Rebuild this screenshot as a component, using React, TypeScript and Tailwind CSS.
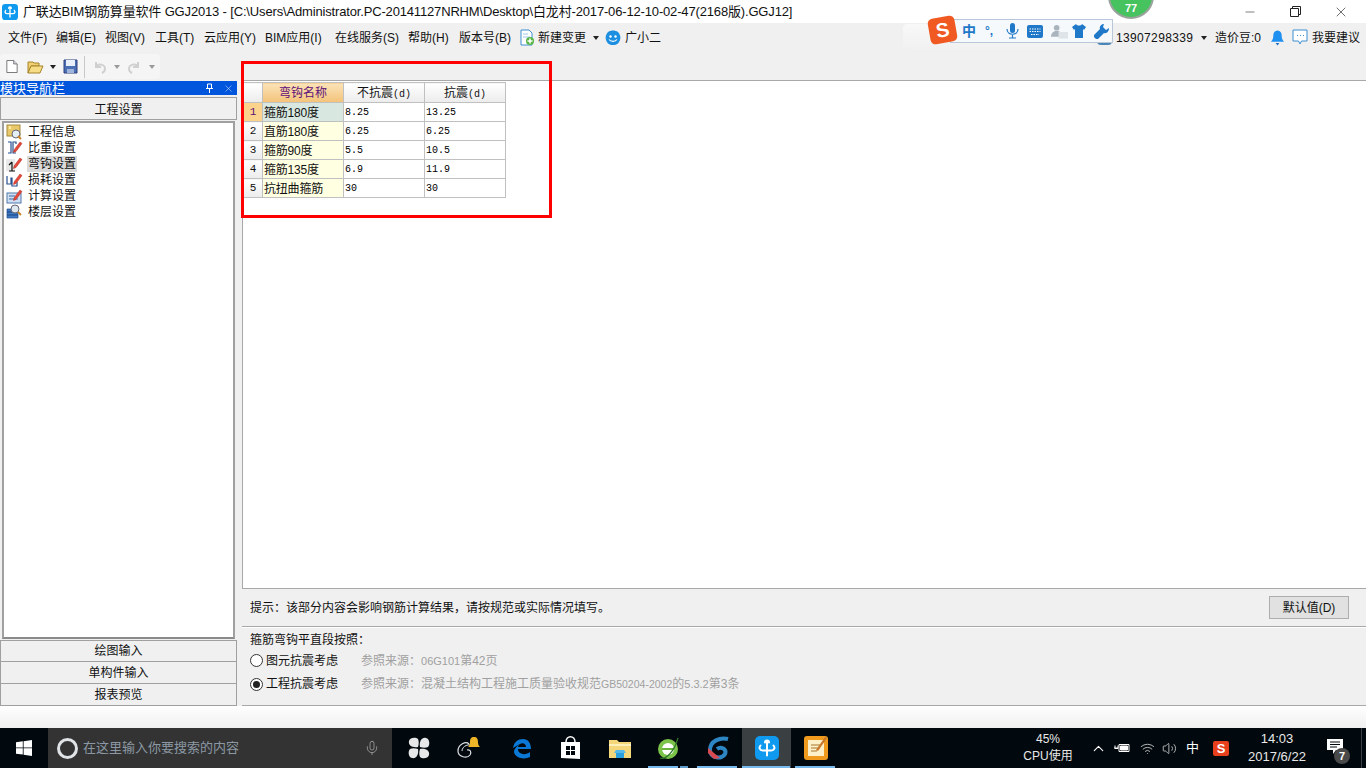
import { ChevronUp, Mic, Minus, Wifi, Volume2, X } from 'lucide-react';

const menus = [
  { label: '文件(F)', w: 'w-[48px]' },
  { label: '编辑(E)', w: 'w-[49px]' },
  { label: '视图(V)', w: 'w-[50px]' },
  { label: '工具(T)', w: 'w-[49px]' },
  { label: '云应用(Y)', w: 'w-[61px]' },
  { label: 'BIM应用(I)', w: 'w-[70px]' },
  { label: '在线服务(S)', w: 'w-[73px]' },
  { label: '帮助(H)', w: 'w-[51px]' },
  { label: '版本号(B)', w: 'w-[60px]' },
];

const rows = [
  ['1', '箍筋180度', '8.25', '13.25'],
  ['2', '直筋180度', '6.25', '6.25'],
  ['3', '箍筋90度', '5.5', '10.5'],
  ['4', '箍筋135度', '6.9', '11.9'],
  ['5', '抗扭曲箍筋', '30', '30'],
];

function Caret({ color = '#222' }: { color?: string }) {
  return (
    <svg width="6" height="4" viewBox="0 0 6 4" className="shrink-0">
      <path d="M0 0h6L3 4z" fill={color} />
    </svg>
  );
}

function AppLogo({ size = 16 }: { size?: number }) {
  return (
    <svg width={size} height={size} viewBox="0 0 24 24" className="shrink-0">
      <rect width="24" height="24" rx="5" fill="#0f9af0" />
      <path d="M12 6.500v13M10 6.500a2 2 0 1 1 4 0M5.500 9.500c-2 2.500-.5 5 2 5h9c2.500 0 4-2.500 2-5" fill="none" stroke="#fff" strokeWidth="2" strokeLinecap="round" />
    </svg>
  );
}

function Pencil() {
  return <path d="M8 10 14 2l2 1.500-6 8-2.500 1z" fill="#e8483a" stroke="#a8281c" strokeWidth=".5" />;
}

function TreeIcon({ kind }: { kind: number }) {
  return (
    <svg width="17" height="16" viewBox="0 0 17 16" className="shrink-0">
      {kind === 0 && (
        <>
          <rect x="1" y="1" width="13" height="11" fill="#e9c86a" stroke="#a58a3c" />
          <rect x="6" y="6" width="8" height="8" rx="4" fill="#e4eef5" stroke="#667" />
          <path d="m12 12 3 3" stroke="#c9862a" strokeWidth="2" />
          <path d="M3 2 5 5M5 2 3 5" stroke="#fff6b0" />
        </>
      )}
      {kind === 1 && (
        <>
          <path d="M2 2h3v11H2M10 4V2H7v11h3" fill="none" stroke="#27508f" strokeWidth="1.200" />
          <Pencil />
        </>
      )}
      {kind === 2 && (
        <>
          <rect x="0" y="3" width="9" height="12" fill="#e8e8e8" />
          <path d="M6 6v9M3 9l3-3M3 15h6" fill="none" stroke="#111" strokeWidth="1.200" />
          <Pencil />
        </>
      )}
      {kind === 3 && (
        <>
          <path d="M1 4v8h4V6h1v8h5v-4" fill="none" stroke="#27508f" strokeWidth="1.200" />
          <Pencil />
        </>
      )}
      {kind === 4 && (
        <>
          <rect x="1" y="5" width="14" height="10" fill="#cfe0f5" stroke="#5177a8" />
          <path d="M3 8h6M3 11h9" stroke="#3e6aa3" />
          <Pencil />
        </>
      )}
      {kind === 5 && (
        <>
          <path d="M1 5h11v3H1zM1 8h11v3H1zM1 11h11v3H1z" fill="#3f79c4" stroke="#1e4b8c" strokeWidth=".7" />
          <circle cx="9" cy="5" r="4" fill="#dfe8ee" stroke="#667" />
          <path d="m12 8 3 3" stroke="#c9862a" strokeWidth="2" />
        </>
      )}
    </svg>
  );
}

function NavButton({ label }: { label: string }) {
  return (
    <div className="h-[22px] border border-t-0 border-[#a0a0a0] first:border-t bg-[#f0f0f0] flex items-center justify-center text-[12px] text-[#111]">
      {label}
    </div>
  );
}

function TaskIcon({ active, children }: { active?: boolean; children: React.ReactNode }) {
  return (
    <div className={`w-[49px] h-full shrink-0 flex items-center justify-center ${active ? 'bg-[#3a3f42]' : ''}`}>
      {children}
    </div>
  );
}

function TitleBar() {
  return (
    <div className="h-[23px] bg-white flex items-center shrink-0">
      <div className="ml-[2px] mr-[5px]">
        <AppLogo />
      </div>
      <span className="text-[13px] tracking-[-0.16px] text-[#111] whitespace-nowrap">
        广联达BIM钢筋算量软件 GGJ2013 - [C:\Users\Administrator.PC-20141127NRHM\Desktop\白龙村-2017-06-12-10-02-47(2168版).GGJ12]
      </span>
      <div className="ml-auto flex items-center text-[#222]">
        <div className="w-[48px] flex justify-center"><Minus size={14} strokeWidth={1} /></div>
        <div className="w-[42px] flex justify-center">
          <svg width="11" height="11" viewBox="0 0 11 11" fill="none" stroke="#222">
            <path d="M.5 2.500h8v8h-8zM2.500 2.500v-2h8v8h-2" />
          </svg>
        </div>
        <div className="w-[50px] flex justify-center"><X size={16} strokeWidth={1} /></div>
      </div>
    </div>
  );
}

function MenuBar() {
  return (
    <div className="h-[27px] flex items-center pl-[8px] pt-[2px] shrink-0 text-[12px] text-[#111] whitespace-nowrap">
      {menus.map((m) => (
        <span key={m.label} className={`${m.w} shrink-0`}>{m.label}</span>
      ))}
      <svg width="16" height="17" viewBox="0 0 16 17" className="mr-[3px] shrink-0">
        <path d="M2 1h8l3 3v12H2z" fill="#fff" stroke="#3e8fd0" />
        <path d="M4 5h5M4 8h7" stroke="#9cc6e6" />
        <circle cx="11" cy="12" r="4" fill="#58b548" />
        <path d="M11 9.500v5M8.500 12h5" stroke="#fff" strokeWidth="1.500" />
      </svg>
      <span className="w-[48px]">新建变更</span>
      <span className="ml-[7px] mr-[6px]"><Caret /></span>
      <svg width="16" height="16" viewBox="0 0 16 16" className="mr-[4px] shrink-0">
        <path d="M3 2c3-2 7-2 10 0 2 2 3 5 2 8-1 3-3 5-7 5s-6-2-7-5c-1-3 0-6 2-8z" fill="#1d8fe0" />
        <circle cx="5.500" cy="6.500" r="1.200" fill="#fff" />
        <circle cx="10.500" cy="6.500" r="1.200" fill="#fff" />
        <path d="M4 9.500c2 2.500 6 2.500 8 0" stroke="#fff" strokeWidth="1.200" fill="none" />
      </svg>
      <span className="w-[36px]">广小二</span>

      <div className="ml-[242px] w-[190px] h-[25px] -mt-[2px] bg-gradient-to-b from-[#f8f8f8] to-[#f1f1f1] rounded-sm shrink-0" />
      <div className="ml-[4px] w-[15px] h-[14px] bg-[#4a86b8] rounded-sm shrink-0" />
      <span className="ml-[4px] w-[77px] tracking-[0.35px]">13907298339</span>
      <span className="ml-[8px] mr-[8px]"><Caret /></span>
      <span className="w-[46px]">造价豆:0</span>
      <svg width="13" height="16" viewBox="0 0 14 16" className="ml-[10px] shrink-0">
        <path d="M7 0c3 0 4.500 2.500 4.500 5 0 3 .5 5 2.500 7H0c2-2 2.500-4 2.500-7C2.500 2.500 4 0 7 0z" fill="#1f8ff0" />
        <path d="M5 13.500h4L7 16z" fill="#1f6fc0" />
      </svg>
      <svg width="16" height="17" viewBox="0 0 16 17" className="ml-[8px] mr-[4px] shrink-0">
        <path d="M1 1h14v11H9.500L8 15l-1.500-3H1z" fill="#fff" stroke="#3e8fd0" />
        <path d="M5 6.500h1M8 6.500h1M11 6.500h1" stroke="#3e8fd0" />
      </svg>
      <span>我要建议</span>
    </div>
  );
}

function ToolBar() {
  return (
    <div className="h-[31px] shrink-0 flex items-start">
      <div className="mt-[4px] w-[160px] h-[25px] bg-[#f5f5f5] rounded-sm flex items-center pl-[6px]">
        <svg width="12" height="15" viewBox="0 0 14 16"><path d="M1 1h8l4 4v10H1z" fill="#fff" stroke="#666" /><path d="M9 1v4h4" fill="#dde" stroke="#666" /></svg>
        <svg width="17" height="15" viewBox="0 0 17 15" className="ml-[9px]">
          <path d="M1 3h5l1 1h5v3H4l-3 7z" fill="#f0d070" stroke="#a5842c" />
          <path d="M4 7h12l-3 7H1z" fill="#f6dc84" stroke="#a5842c" />
        </svg>
        <span className="ml-[6px]"><Caret /></span>
        <svg width="15" height="15" viewBox="0 0 15 15" className="ml-[7px]">
          <path d="M1 1h13v13H1z" fill="#4a6fb5" stroke="#2c3f7d" />
          <path d="M3 1h9v6H3z" fill="#e8eefa" />
          <path d="M4 10h7v4H4z" fill="#9fb4da" />
        </svg>
        <div className="w-px h-[22px] bg-[#c8c8c8] ml-[6px]" />
        <svg width="14" height="14" viewBox="0 0 14 14" className="ml-[8px]" fill="none" stroke="#d0d0d0" strokeWidth="2">
          <path d="M3 2v5h5" /><path d="M3 7c2-4 9-3 9 2 0 2-1 3-3 4" />
        </svg>
        <span className="ml-[7px]"><Caret color="#9a9a9a" /></span>
        <svg width="14" height="14" viewBox="0 0 14 14" className="ml-[7px]" fill="none" stroke="#d0d0d0" strokeWidth="2">
          <path d="M11 2v5H6" /><path d="M11 7C9 3 2 4 2 9c0 2 1 3 3 4" />
        </svg>
        <span className="ml-[8px]"><Caret color="#9a9a9a" /></span>
      </div>
    </div>
  );
}

function LeftPanel() {
  const items = ['工程信息', '比重设置', '弯钩设置', '损耗设置', '计算设置', '楼层设置'];
  return (
    <div className="w-[237px] shrink-0 flex flex-col">
      <div className="h-[14px] bg-[#0055dd] text-white text-[13px] leading-none flex items-center shrink-0">
        <span>模块导航栏</span>
        <svg width="9" height="10" viewBox="0 0 9 10" className="ml-auto mr-[9px]" fill="none" stroke="#fff">
          <path d="M2.500 1h4v4.500h-4zM1 5.500h7M4.500 5.500V10" />
        </svg>
        <X size={11} strokeWidth={1} className="mr-[3px]" />
      </div>
      <div className="mt-[2px] h-[23px] pt-[2px] border border-[#a0a0a0] bg-[#f0f0f0] flex items-center justify-center text-[12px] text-[#111] shrink-0">
        工程设置
      </div>
      <div className="mt-px mx-[2px] flex-1 border-2 border-[#a0a0a0] border-b-[#8a8a8a] bg-white pt-[1px] pl-[2px] flex flex-col">
        {items.map((t, i) => (
          <div key={t} className="h-[16px] flex items-center gap-[4px] text-[12px] text-[#111]">
            <TreeIcon kind={i} />
            <span className={`h-[16px] leading-[16px] px-[1px] ${i === 2 ? 'bg-[#d9d9d9]' : ''}`}>{t}</span>
          </div>
        ))}
      </div>
      <div className="mt-[1px] shrink-0">
        <NavButton label="绘图输入" />
        <NavButton label="单构件输入" />
        <NavButton label="报表预览" />
      </div>
    </div>
  );
}

function SettingsTable() {
  const mono = "font-['Liberation_Mono',monospace] text-[10px]";
  return (
    <table className="border-collapse table-fixed w-[262px] text-[12px] text-[#111]">
      <colgroup>
        <col className="w-[19px]" />
        <col className="w-[81px]" />
        <col className="w-[81px]" />
        <col className="w-[81px]" />
      </colgroup>
      <thead>
        <tr className="h-[20px]">
          <th className="border border-[#c0c0c0] bg-gradient-to-b from-white to-[#ececec]" />
          <th className="border border-[#c0c0c0] bg-gradient-to-b from-[#fbe3b8] to-[#f3c278] font-normal text-[#60107a]">弯钩名称</th>
          <th className="border border-[#c0c0c0] bg-gradient-to-b from-white to-[#ececec] font-normal">
            不抗震<span className={mono}>(d)</span>
          </th>
          <th className="border border-[#c0c0c0] bg-gradient-to-b from-white to-[#ececec] font-normal">
            抗震<span className={mono}>(d)</span>
          </th>
        </tr>
      </thead>
      <tbody>
        {rows.map((r, i) => (
          <tr key={r[0]} className="h-[19px]">
            <td className={`border border-[#c0c0c0] pt-[1px] text-center font-['Liberation_Mono',monospace] text-[11px] ${i === 0 ? 'bg-[#fbd38c] text-[#60107a]' : 'bg-gradient-to-b from-white to-[#ececec]'}`}>{r[0]}</td>
            <td className={`border border-[#c0c0c0] pl-[1px] pt-[1px] whitespace-nowrap leading-none tracking-[-0.2px] ${i === 0 ? 'bg-[#d8e8e0]' : 'bg-[#ffffe2]'}`}>{r[1]}</td>
            <td className={`border border-[#c0c0c0] pl-[1px] pt-[1px] leading-none text-black ${mono}`}>{r[2]}</td>
            <td className={`border border-[#c0c0c0] pl-[1px] pt-[1px] leading-none text-black ${mono}`}>{r[3]}</td>
          </tr>
        ))}
      </tbody>
    </table>
  );
}

function Radio({ on }: { on?: boolean }) {
  return (
    <span className="w-[13px] h-[13px] rounded-full border border-[#333] bg-white flex items-center justify-center shrink-0">
      {on && <span className="w-[7px] h-[7px] rounded-full bg-[#222]" />}
    </span>
  );
}

function RightPanel() {
  return (
    <div className="flex-1 ml-[5px] -mt-px flex flex-col min-w-0">
      <div className="flex-1 bg-white border-t border-b border-l border-[#a8a8a8] pt-[1px]">
        <SettingsTable />
      </div>
      <div className="h-[38px] shrink-0 border-b border-[#a8a8a8] flex items-center pl-[8px] pr-[17px] text-[12px] text-[#111]">
        <span>提示：该部分内容会影响钢筋计算结果，请按规范或实际情况填写。</span>
        <div className="ml-auto w-[80px] h-[23px] bg-[#e1e1e1] border border-[#adadad] flex items-center justify-center">默认值(D)</div>
      </div>
      <div className="h-[79px] shrink-0 border-t border-t-white border-b border-b-[#a8a8a8] pl-[8px] pt-[3px] text-[12px] text-[#111]">
        <div className="h-[18px] leading-[18px]">箍筋弯钩平直段按照：</div>
        <div className="h-[23px] flex items-center">
          <Radio />
          <span className="ml-[3px] w-[95px]">图元抗震考虑</span>
          <span className="text-[#a0a0a0]">参照来源：<span className="text-[11px]">06G101</span>第42页</span>
        </div>
        <div className="h-[23px] pt-[1px] flex items-center">
          <Radio on />
          <span className="ml-[3px] w-[95px]">工程抗震考虑</span>
          <span className="text-[#a0a0a0]">
            参照来源：混凝土结构工程施工质量验收规范<span className="text-[10.5px]">GB50204-2002</span>的<span className="text-[11px]">5.3.2</span>第3条
          </span>
        </div>
      </div>
    </div>
  );
}

function Taskbar() {
  return (
    <div className="h-[40px] shrink-0 bg-[#02090e] flex items-center text-white relative">
      <div className="w-[48px] flex justify-center shrink-0">
        <svg width="16" height="16" viewBox="0 0 16 16" fill="#fff">
          <path d="M0 2.300 6.800 1.300v6.200H0zM7.600 1.200 16 0v7.500H7.600zM0 8.300h6.800v6.300L0 13.700zM7.600 8.300H16V16l-8.400-1.200z" />
        </svg>
      </div>
      <div className="w-[344px] h-full bg-[#333333] flex items-center shrink-0 pl-[9px]">
        <span className="w-[21px] h-[21px] rounded-full border-[3px] border-[#dfe3e6] shrink-0" />
        <span className="ml-[5px] text-[13px] text-[#8b98a3]">在这里输入你要搜索的内容</span>
        <Mic size={16} strokeWidth={1} className="ml-auto mr-[12px] text-[#b8b8b8]" />
      </div>
      <div className="ml-[2px] flex h-full">
        <TaskIcon>
          <svg width="22" height="22" viewBox="0 0 22 22" fill="#e6e8ea">
            <path d="M10 10C4 11 0 8 1 4s7-4 9-2c1 2 1 5 0 8zM12 10c-1-6 2-10 6-9s4 7 2 9c-2 1-5 1-8 0zM12 12c6-1 10 2 9 6s-7 4-9 2c-1-2-1-5 0-8zM10 12c1 6-2 10-6 9s-4-7-2-9c2-1 5-1 8 0z" />
          </svg>
        </TaskIcon>
        <TaskIcon>
          <svg width="28" height="24" viewBox="0 0 28 24" fill="none">
            <path d="M15 8c-3-3-11 0-11 7 0 6 9 8 12 4 2-3 0-6-3-5" stroke="#dfe3e6" strokeWidth="1.200" />
            <path d="M8 15c0-5 7-8 12-5" stroke="#dfe3e6" />
            <path d="M20 1c3 0 4 2 4 5s1 4 2 5H14c1-1 2-2 2-5s1-5 4-5z" fill="#f0b428" />
          </svg>
        </TaskIcon>
        <div className="ml-[5px] flex h-full">
          <TaskIcon>
            <svg width="20" height="21" viewBox="0 0 20 21">
              <path d="M1 10C2 4 6 1 11 1c5 0 8 4 8 10H6c0 5 7 7 12 3v5c-6 3-15 1-16-5 0-1 0-2 1-3 1-2 3-4 5-5-2 1-4 2-7 4zm5-1h8c0-5-7-5-8 0z" fill="#0a78d4" />
            </svg>
          </TaskIcon>
          <TaskIcon>
            <svg width="21" height="24" viewBox="0 0 21 24">
              <path d="M1 6h19v17l-19-1z" fill="#fff" />
              <path d="M6 6c0-7 9-7 9 0" stroke="#fff" strokeWidth="1.500" fill="none" />
              <path d="M6 10h4v4H6zM11 10h4v4h-4zM6 15h4v4H6zM11 15h4v4h-4z" fill="#02090e" />
            </svg>
          </TaskIcon>
          <TaskIcon>
            <svg width="22" height="19" viewBox="0 0 22 19">
              <path d="M0 1h8l2 2h12v16H0z" fill="#f4d77a" />
              <path d="M0 5h22v2H0z" fill="#fdf0b8" />
              <path d="M7 14h8v5H7z" fill="#2a9fe0" />
              <path d="M5 14h12l-2-3H7z" fill="#55b8ea" />
            </svg>
          </TaskIcon>
          <TaskIcon>
            <svg width="23" height="24" viewBox="0 0 23 24">
              <circle cx="11" cy="13" r="10" fill="#7cc34a" />
              <circle cx="11" cy="13" r="6" fill="#fff" />
              <path d="M5 12h12v2H5z" fill="#6ab33c" />
              <path d="M3 22c6 2 14-6 18-20" stroke="#2f7a2a" strokeWidth="1.200" fill="none" />
            </svg>
          </TaskIcon>
          <TaskIcon>
            <svg width="24" height="24" viewBox="0 0 24 24" fill="none">
              <path d="M22 3C14 1 4 5 4 14c0 8 12 10 15 4 2-5-4-8-8-5" stroke="#2d86c4" strokeWidth="4" />
              <path d="M2 12 14 22 8 23 2 17z" fill="#d84a50" />
            </svg>
          </TaskIcon>
          <TaskIcon active>
            <AppLogo size={24} />
          </TaskIcon>
          <TaskIcon>
            <svg width="24" height="24" viewBox="0 0 24 24">
              <rect width="24" height="24" rx="3" fill="#f09a1e" />
              <path d="M4 4h16v16H4z" fill="#fdf0c8" />
              <path d="M7 9h9M7 12h9M7 15h6" stroke="#a5752c" />
              <path d="m12 14 9-13 2 1-9 13z" fill="#c8782a" />
            </svg>
          </TaskIcon>
        </div>
      </div>

      <div className="ml-auto flex items-center h-full shrink-0">
        <div className="w-[70px] text-center text-[12px] leading-[17px] text-[#e8e8e8]">
          <div>45%</div>
          <div>CPU使用</div>
        </div>
        <div className="ml-[3px] w-[24px] flex justify-center"><ChevronUp size={17} strokeWidth={1.500} /></div>
        <svg width="16" height="12" viewBox="0 0 16 12" className="ml-[4px]" fill="none" stroke="#fff">
          <path d="M5 2.500h10v7H5z" /><path d="M6.500 4h7v4h-7z" fill="#fff" /><path d="M0 6h4M1 3.500v3h3v-3" />
        </svg>
        <Wifi size={15} strokeWidth={1.300} className="ml-[10px] text-[#d8d8d8]" />
        <Volume2 size={15} strokeWidth={1.200} className="ml-[7px] text-[#e8e8e8]" />
        <span className="ml-[9px] w-[13px] text-[13px] text-white">中</span>
        <span className="ml-[14px] w-[16px] h-[15px] rounded-[2px] bg-[#e8401c] flex items-center justify-center text-[13px] font-bold text-white leading-none">S</span>
        <div className="ml-[6px] w-[84px] text-center text-[13px] leading-[18px] text-[#e8e8e8]">
          <div>14:03</div>
          <div>2017/6/22</div>
        </div>
        <div className="ml-[1px] w-[30px] h-full flex items-center relative">
          <svg width="16" height="15" viewBox="0 0 16 15" className="ml-[7px] -mt-[4px]">
            <path d="M0 0h16v11H9l-3 4v-4H0z" fill="#fff" />
            <path d="M3 3h10M3 5.500h10M3 8h7" stroke="#02090e" />
          </svg>
          <span className="absolute left-[14px] top-[20px] w-[16px] h-[16px] rounded-full bg-[#4a4a4a] text-[11px] font-bold leading-[16px] text-center">7</span>
        </div>
        <div className="ml-[11px] mr-[4px] w-px h-full bg-[#3a4045]" />
      </div>

      {/* open-window markers under the taskbar buttons */}
      <div className="absolute left-[648px] bottom-0 w-[30px] h-[2px] bg-[#76b9ed]" />
      <div className="absolute left-[680px] bottom-0 w-[8px] h-[2px] bg-[#5f9ccc]" />
      <div className="absolute left-[697px] bottom-0 w-[40px] h-[2px] bg-[#76b9ed]" />
      <div className="absolute left-[742px] bottom-0 w-[48px] h-[2px] bg-[#76b9ed]" />
      <div className="absolute left-[795px] bottom-0 w-[40px] h-[2px] bg-[#76b9ed]" />
    </div>
  );
}

export default function App() {
  return (
    <div className="relative w-[1366px] h-[768px] overflow-hidden flex flex-col bg-[#f0f0f0] font-['Liberation_Sans','Noto_Sans_CJK_SC',sans-serif]">
      <TitleBar />
      <MenuBar />
      <ToolBar />
      <div className="h-[625px] shrink-0 flex">
        <LeftPanel />
        <RightPanel />
      </div>
      <div className="h-[22px] shrink-0 bg-gradient-to-b from-white to-[#f0f0f0]" />
      <Taskbar />

      {/* red annotation box drawn over the screenshot */}
      <div className="absolute left-[241px] top-[61px] w-[311px] h-[157px] border-[3px] border-[#ff0000] pointer-events-none" />

      {/* floating IME bar */}
      <div className="absolute left-[950px] top-[19px] w-[163px] h-[24px] bg-[#f6f9fc] border border-[#b8c8d8] flex items-center pl-[11px] text-[#1f78c8]">
        <span className="w-[14px] text-[14px] font-bold leading-none">中</span>
        <span className="ml-[9px] w-[12px] text-[12px] font-bold leading-none">°,</span>
        <svg width="13" height="16" viewBox="0 0 13 16" fill="#1f78c8" className="ml-[9px]"><rect x="4" width="5" height="10" rx="2.500" /><path d="M1 6c0 7 11 7 11 0M6.500 12v3M3 15h7" fill="none" stroke="#1f78c8" strokeWidth="1.200" /></svg>
        <svg width="16" height="13" viewBox="0 0 16 13" className="ml-[8px]"><rect width="16" height="13" rx="2" fill="#1f78c8" /><path d="M2.500 4h11M2.500 6.500h11M4 9.500h8" stroke="#fff" strokeDasharray="1.500 1" /></svg>
        <svg width="17" height="15" viewBox="0 0 18 15" fill="#aab4bd" className="ml-[8px]"><circle cx="6" cy="3.500" r="3" /><path d="M0 13c0-8 12-8 12 0z" /><rect x="8" y="8" width="10" height="7" fill="#dfe4e8" /></svg>
        <svg width="14" height="14" viewBox="0 0 14 14" fill="#1f78c8" className="ml-[4px]"><path d="M4 0 0 3l2 3 1-1v9h8V5l1 1 2-3-4-3C9 2 5 2 4 0z" /></svg>
        <svg width="15" height="15" viewBox="0 0 15 15" fill="#1f78c8" className="ml-[8px]"><path d="M10 0c-3 0-5 3-4 5L0 11c-1 2 2 5 4 4l6-6c3 1 5-2 5-5l-3 2-3-3z" /></svg>
      </div>
      <div className="absolute left-[929px] top-[17px] w-[27px] h-[26px] rounded-[5px] bg-[#f05a22] -rotate-[10deg] flex items-center justify-center text-white text-[20px] font-bold leading-none">S</div>

      {/* floating score ball */}
      <div className="absolute left-[1108px] -top-[27px] w-[46px] h-[46px] rounded-full bg-[#46c25e] border-[2px] border-[#9aa39c] flex items-end justify-center pb-[3px] text-white text-[11px] font-bold leading-none">77</div>
    </div>
  );
}
